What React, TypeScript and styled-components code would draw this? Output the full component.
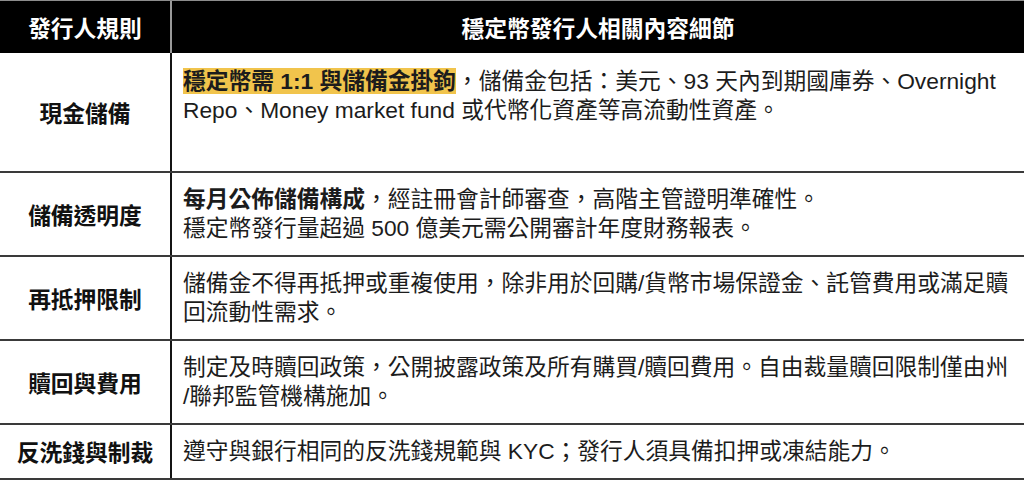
import React from 'react';
import styled, { createGlobalStyle } from 'styled-components';

const GlobalStyle = createGlobalStyle`
  html, body {
    margin: 0;
    padding: 0;
    background: #fff;
  }
  body {
    font-family: 'Liberation Sans', 'Noto Sans CJK TC', sans-serif;
  }
`;

const Table = styled.div`
  width: 1024px;
  border-top: 1px solid #8c8c8c;
  font-size: 22.75px;
  color: #1c1c1c;
`;

const Row = styled.div<{ $head?: boolean }>`
  display: grid;
  grid-template-columns: 172px 1fr;
  background: ${(p) => (p.$head ? '#000' : '#fff')};
  border-bottom: ${(p) => (p.$head ? 'none' : '2px solid #3a3a3a')};
`;

const HeadCell = styled.div<{ $first?: boolean }>`
  height: 52px;
  display: flex;
  align-items: center;
  justify-content: center;
  color: #fff;
  font-weight: 700;
  border-right: ${(p) => (p.$first ? '2px solid #9a9a9a' : 'none')};
`;

const Label = styled.div`
  display: flex;
  align-items: center;
  justify-content: center;
  font-weight: 700;
  color: #111;
  border-right: 2px solid #141414;
`;

const Detail = styled.div<{ $minHeight?: number }>`
  box-sizing: border-box;
  padding: ${(p) => (p.$minHeight ? '14px' : '12px')} 8px 12px 11px;
  line-height: 29px;
  min-height: ${(p) => (p.$minHeight ? `${p.$minHeight}px` : 'auto')};
`;

const Mark = styled.span`
  background: #f1c44c;
  font-weight: 700;
`;

const Strong = styled.span`
  font-weight: 700;
`;

export default function App() {
  return (
    <>
      <GlobalStyle />
      <Table lang="zh-Hant-TW">
        <Row $head>
          <HeadCell $first>發行人規則</HeadCell>
          <HeadCell>穩定幣發行人相關內容細節</HeadCell>
        </Row>
        <Row>
          <Label>現金儲備</Label>
          <Detail $minHeight={118}>
            <Mark>穩定幣需 1:1 與儲備金掛鉤</Mark>，儲備金包括：美元、93 天內到期國庫券、Overnight
            Repo、Money market fund 或代幣化資產等高流動性資產。
          </Detail>
        </Row>
        <Row>
          <Label>儲備透明度</Label>
          <Detail>
            <Strong>每月公佈儲備構成</Strong>，經註冊會計師審查，高階主管證明準確性。
            <br />
            穩定幣發行量超過 500 億美元需公開審計年度財務報表。
          </Detail>
        </Row>
        <Row>
          <Label>再抵押限制</Label>
          <Detail>
            儲備金不得再抵押或重複使用，除非用於回購/貨幣市場保證金、託管費用或滿足贖回流動性需求。
          </Detail>
        </Row>
        <Row>
          <Label>贖回與費用</Label>
          <Detail>
            制定及時贖回政策，公開披露政策及所有購買/贖回費用。自由裁量贖回限制僅由州
            <br />
            /聯邦監管機構施加。
          </Detail>
        </Row>
        <Row>
          <Label>反洗錢與制裁</Label>
          <Detail>遵守與銀行相同的反洗錢規範與 KYC；發行人須具備扣押或凍結能力。</Detail>
        </Row>
      </Table>
    </>
  );
}
